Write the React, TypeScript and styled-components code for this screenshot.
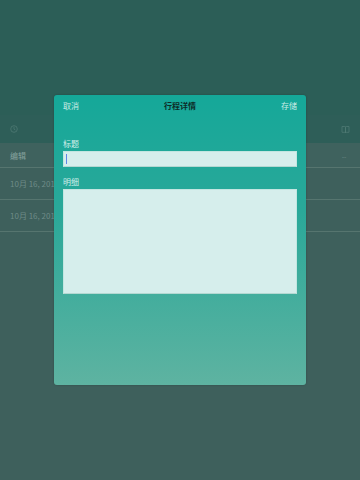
import React from "react";
import styled, { createGlobalStyle } from "styled-components";

const GlobalStyle = createGlobalStyle`
  html, body {
    margin: 0;
    padding: 0;
    background: #3e605c;
  }
  body {
    font-family: "Noto Sans CJK SC", "Liberation Sans", sans-serif;
  }
`;

const Screen = styled.div`
  position: relative;
  width: 360px;
  height: 480px;
  overflow: hidden;
  display: flex;
  flex-direction: column;
  background: #3e605c;
`;

const NavArea = styled.div`
  height: 115px;
  background: #2c5e57;
`;

const Toolbar = styled.div`
  height: 28px;
  display: flex;
  align-items: center;
  justify-content: space-between;
  padding: 0 10px;
  background: #2e5e58;
  color: #4f7a74;
`;

const ListRow = styled.div<{ head?: boolean }>`
  height: ${(p) => (p.head ? "24px" : "31px")};
  display: flex;
  align-items: center;
  justify-content: space-between;
  padding: 0 10px;
  background: ${(p) => (p.head ? "#3f625e" : "#3e605c")};
  border-bottom: 1px solid #56756f;
  font-size: 8px;
  color: ${(p) => (p.head ? "#86a29e" : "#6e8c88")};
`;

const Dots = styled.span`
  font-family: "Liberation Sans", sans-serif;
  font-size: 7px;
  letter-spacing: -0.5px;
  color: #6e8c88;
  margin-right: 4px;
`;

const Modal = styled.div`
  position: absolute;
  left: 54px;
  top: 95px;
  width: 252px;
  height: 290px;
  border-radius: 3px;
  background: linear-gradient(180deg, #15a899 0%, #2aa899 40%, #5eb3a1 100%);
  box-shadow: 0 0 2px rgba(0, 0, 0, 0.25);
  display: flex;
  flex-direction: column;
  padding: 0 9px;
  box-sizing: border-box;
`;

const ModalHeader = styled.div`
  height: 21px;
  display: flex;
  align-items: center;
  justify-content: space-between;
  font-size: 8px;
  margin-bottom: 23px;
`;

const HeaderButton = styled.span`
  color: #c9ece6;
  width: 30px;
  &:last-child {
    text-align: right;
  }
`;

const Title = styled.span`
  color: #0d2c28;
  font-weight: 700;
`;

const Label = styled.div`
  font-size: 8px;
  color: #d2efea;
  line-height: 10px;
  margin-bottom: 2px;
`;

const Field = styled.div<{ tall?: boolean }>`
  position: relative;
  height: ${(p) => (p.tall ? "105px" : "16px")};
  margin-bottom: ${(p) => (p.tall ? "0" : "10px")};
  background: #d6eeec;
  border: 1px solid #c3e6e1;
  border-bottom-color: #b4d8d2;
  box-sizing: border-box;
`;

const Caret = styled.span`
  position: absolute;
  left: 2px;
  top: 2px;
  width: 1px;
  height: 10px;
  background: #5f86e6;
`;

const Clock = () => (
  <svg width="8" height="8" viewBox="0 0 8 8" fill="none" stroke="currentColor" strokeWidth="0.8">
    <circle cx="4" cy="4" r="3.3" />
    <path d="M4 2v2.2l1.3 0.8" />
  </svg>
);

const Book = () => (
  <svg width="9" height="9" viewBox="0 0 9 9" fill="none" stroke="currentColor" strokeWidth="0.8">
    <path d="M1 1.5h2.8c0.4 0 0.7 0.3 0.7 0.7V8c0-0.4-0.3-0.7-0.7-0.7H1z" />
    <path d="M8 1.5H5.2c-0.4 0-0.7 0.3-0.7 0.7V8c0-0.4 0.3-0.7 0.7-0.7H8z" />
  </svg>
);

export default function App() {
  return (
    <>
      <GlobalStyle />
      <Screen>
        <NavArea />
        <Toolbar>
          <Clock />
          <Book />
        </Toolbar>
        <ListRow head>
          <span>编辑</span>
          <Dots>...</Dots>
        </ListRow>
        <ListRow>
          <span>10月 16, 2015</span>
        </ListRow>
        <ListRow>
          <span>10月 16, 2015</span>
        </ListRow>

        <Modal>
          <ModalHeader>
            <HeaderButton>取消</HeaderButton>
            <Title>行程详情</Title>
            <HeaderButton>存储</HeaderButton>
          </ModalHeader>
          <Label>标题</Label>
          <Field>
            <Caret />
          </Field>
          <Label>明细</Label>
          <Field tall />
        </Modal>
      </Screen>
    </>
  );
}
